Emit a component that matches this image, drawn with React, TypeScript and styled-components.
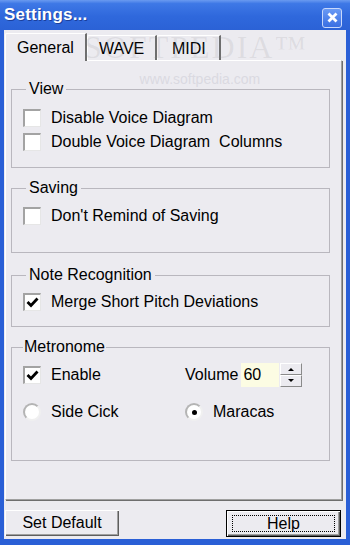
import React, { useState } from 'react';
import styled, { createGlobalStyle } from 'styled-components';

const GlobalStyle = createGlobalStyle`
  html, body {
    margin: 0;
    padding: 0;
    background: #ffffff;
  }
  body {
    font-family: 'Liberation Sans', Arial, sans-serif;
  }
`;

const Window = styled.div`
  position: relative;
  width: 350px;
  height: 545px;
  box-sizing: border-box;
  padding: 0 4px 6px 4px;
  background: #2a5fd6;
  display: flex;
  flex-direction: column;
  overflow: hidden;
`;

const TitleBar = styled.div`
  height: 30px;
  margin: 0 -4px;
  padding: 0 8px 0 4px;
  display: flex;
  align-items: center;
  justify-content: space-between;
  background: linear-gradient(#6a9af0 0%, #3e78e6 12%, #2f68dc 55%, #2b62d6 100%);
`;

const Title = styled.span`
  color: #ffffff;
  font-size: 17px;
  font-weight: bold;
  letter-spacing: 0.2px;
  text-shadow: 1px 1px 0 #1b3f9a;
`;

const CloseButton = styled.div`
  width: 18px;
  height: 18px;
  margin-top: 5px;
  border: 1px solid #c8d8fb;
  border-radius: 3px;
  background: linear-gradient(#6a9af5, #3a6fe2);
  display: flex;
  align-items: center;
  justify-content: center;
`;

const Client = styled.div`
  flex: 1;
  background: #ecebf0;
  padding: 3px 3px 2px 1px;
  display: flex;
  flex-direction: column;
`;

const TabRow = styled.div`
  display: flex;
  align-items: flex-end;
  height: 27px;
`;

const Tab = styled.div<{ $active?: boolean }>`
  position: relative;
  z-index: ${(p) => (p.$active ? 2 : 1)};
  box-sizing: border-box;
  min-width: 64px;
  height: ${(p) => (p.$active ? '28px' : '25px')};
  margin-bottom: ${(p) => (p.$active ? '-1px' : '0')};
  padding: ${(p) => (p.$active ? '1px 11px 0' : '2px 11px 0')};
  display: flex;
  align-items: center;
  justify-content: center;
  font-size: 16px;
  color: #000;
  background: #ecebf0;
  border-top: 1px solid #ffffff;
  border-left: 1px solid #ffffff;
  border-right: 2px solid #6e6e6e;
  border-top-left-radius: 2px;
`;

const Panel = styled.div`
  flex: 1;
  box-sizing: border-box;
  border-top: 1px solid #ffffff;
  border-left: 1px solid #ffffff;
  border-right: 1px solid #a0a0a0;
  border-bottom: 1px solid #a0a0a0;
  box-shadow: 1px 1px 0 #6e6e6e;
  margin-right: 1px;
  padding: 19px 11px 0 5px;
  display: flex;
  flex-direction: column;
  gap: 11px;
`;

const Group = styled.fieldset<{ $pt: number; $pb: number; $mt?: number }>`
  margin: ${(p) => p.$mt ?? 0}px 0 0 0;
  min-width: 0;
  padding: ${(p) => p.$pt}px 11px ${(p) => p.$pb}px 11px;
  border: 1px solid #b9b7be;
  border-radius: 0;
  display: flex;
  flex-direction: column;
`;

const Legend = styled.legend<{ $tight?: boolean }>`
  font-size: 16px;
  line-height: 18px;
  color: #000;
  padding: 0 ${(p) => (p.$tight ? '1px' : '3px')};
  margin-left: ${(p) => (p.$tight ? '0' : '3px')};
`;

const Row = styled.div`
  height: 24px;
  display: flex;
  align-items: center;
`;

const Grid = styled.div`
  display: grid;
  grid-template-columns: 162px 1fr;
  row-gap: 13px;
`;

const Label = styled.span`
  font-size: 16px;
  color: #000;
  white-space: pre;
`;

const CheckBox = styled.span`
  box-sizing: border-box;
  width: 18px;
  height: 18px;
  margin-right: 10px;
  background: #ffffff;
  border-top: 2px solid #a3a3a3;
  border-left: 2px solid #a3a3a3;
  border-right: 1px solid #e6e6e6;
  border-bottom: 1px solid #e6e6e6;
  display: flex;
  align-items: center;
  justify-content: center;
`;

const RadioCircle = styled.span`
  box-sizing: border-box;
  width: 18px;
  height: 18px;
  margin-right: 10px;
  border-radius: 50%;
  background: #ffffff;
  border: 2px solid;
  border-color: #b4b4b4 #f0f0f0 #f0f0f0 #b4b4b4;
  display: flex;
  align-items: center;
  justify-content: center;
`;

const RadioDot = styled.span`
  width: 5px;
  height: 5px;
  border-radius: 50%;
  background: #000;
`;

const SpinWrap = styled.div`
  display: flex;
  align-items: center;
  height: 24px;
`;

const NumberBox = styled.div`
  box-sizing: border-box;
  width: 38px;
  height: 24px;
  margin-left: 3px;
  padding-left: 2px;
  background: #fcfce3;
  font-size: 16px;
  line-height: 24px;
`;

const SpinCol = styled.div`
  display: flex;
  flex-direction: column;
  margin-left: 1px;
`;

const SpinButton = styled.div`
  box-sizing: border-box;
  width: 22px;
  height: 12px;
  background: #ecebf0;
  border-top: 1px solid #ffffff;
  border-left: 1px solid #ffffff;
  border-right: 1px solid #8a8a8a;
  border-bottom: 1px solid #8a8a8a;
  display: flex;
  align-items: center;
  justify-content: center;
`;

const Footer = styled.div`
  display: flex;
  justify-content: space-between;
  padding: 10px 2px 0 0;
`;

const Button = styled.div<{ $default?: boolean }>`
  position: relative;
  box-sizing: border-box;
  width: ${(p) => (p.$default ? '115px' : '114px')};
  height: ${(p) => (p.$default ? '27px' : '26px')};
  background: #ecebf0;
  font-size: 16px;
  display: flex;
  align-items: center;
  justify-content: center;
  border: ${(p) => (p.$default ? '1px solid #000' : 'none')};
  box-shadow: inset 1px 1px 0 #ffffff, inset -1px -1px 0 #5e5e5e, inset -2px -2px 0 #a0a0a0;
`;

const FocusRing = styled.span`
  position: absolute;
  inset: 4px 5px 4px 5px;
  border: 1px dotted #000;
`;

const Watermark = styled.div`
  position: absolute;
  z-index: 5;
  left: 84px;
  top: 31px;
  pointer-events: none;
  display: flex;
  flex-direction: column;
  align-items: center;
  color: rgba(140, 140, 150, 0.16);
  font-family: 'Liberation Serif', 'Times New Roman', serif;
`;

const WatermarkBig = styled.span`
  font-size: 32px;
  letter-spacing: 2px;
  line-height: 32px;
`;

const WatermarkSmall = styled.span`
  font-family: 'Liberation Sans', Arial, sans-serif;
  font-size: 14px;
  margin-top: 8px;
  margin-left: 8px;
  color: rgba(200, 200, 210, 0.5);
`;

function Check() {
  return (
    <svg width="13" height="13" viewBox="0 0 13 13">
      <path d="M1.5 6 L5 9.5 L11.5 2.5" fill="none" stroke="#000" strokeWidth="2.8" />
    </svg>
  );
}

function CheckItem({ checked, label }: { checked?: boolean; label: string }) {
  return (
    <Row>
      <CheckBox>{checked ? <Check /> : null}</CheckBox>
      <Label>{label}</Label>
    </Row>
  );
}

function RadioItem({ checked, label }: { checked?: boolean; label: string }) {
  return (
    <Row>
      <RadioCircle>{checked ? <RadioDot /> : null}</RadioCircle>
      <Label>{label}</Label>
    </Row>
  );
}

function Arrow({ up }: { up?: boolean }) {
  return (
    <svg width="6" height="4" viewBox="0 0 6 4">
      <path d={up ? 'M0 4 L3 1 L6 4 Z' : 'M0 0 L3 3 L6 0 Z'} fill="#000" />
    </svg>
  );
}

function App() {
  const [volume] = useState(60);
  return (
    <Window>
      <GlobalStyle />
      <TitleBar>
        <Title>Settings...</Title>
        <CloseButton>
          <svg width="11" height="11" viewBox="0 0 11 11">
            <path d="M1.5 1.5 L9.5 9.5 M9.5 1.5 L1.5 9.5" stroke="#fff" strokeWidth="2.8" />
          </svg>
        </CloseButton>
      </TitleBar>
      <Client>
        <TabRow>
          <Tab $active>General</Tab>
          <Tab>WAVE</Tab>
          <Tab>MIDI</Tab>
        </TabRow>
        <Panel>
          <Group $pt={8} $pb={13}>
            <Legend>View</Legend>
            <CheckItem label="Disable Voice Diagram" />
            <CheckItem label="Double Voice Diagram  Columns" />
          </Group>
          <Group $pt={7} $pb={24}>
            <Legend>Saving</Legend>
            <CheckItem label="Don't Remind of Saving" />
          </Group>
          <Group $pt={6} $pb={12} $mt={2}>
            <Legend>Note Recognition</Legend>
            <CheckItem checked label="Merge Short Pitch Deviations" />
          </Group>
          <Group $pt={7} $pb={36}>
            <Legend $tight>Metronome</Legend>
            <Grid>
              <CheckItem checked label="Enable" />
              <SpinWrap>
                <Label>Volume</Label>
                <NumberBox>{volume}</NumberBox>
                <SpinCol>
                  <SpinButton>
                    <Arrow up />
                  </SpinButton>
                  <SpinButton>
                    <Arrow />
                  </SpinButton>
                </SpinCol>
              </SpinWrap>
              <RadioItem label="Side Cick" />
              <RadioItem checked label="Maracas" />
            </Grid>
          </Group>
        </Panel>
        <Footer>
          <Button>Set Default</Button>
          <Button $default>
            <FocusRing />
            Help
          </Button>
        </Footer>
      </Client>
      <Watermark>
        <WatermarkBig>SOFTPEDIA™</WatermarkBig>
        <WatermarkSmall>www.softpedia.com</WatermarkSmall>
      </Watermark>
    </Window>
  );
}

export default App;
